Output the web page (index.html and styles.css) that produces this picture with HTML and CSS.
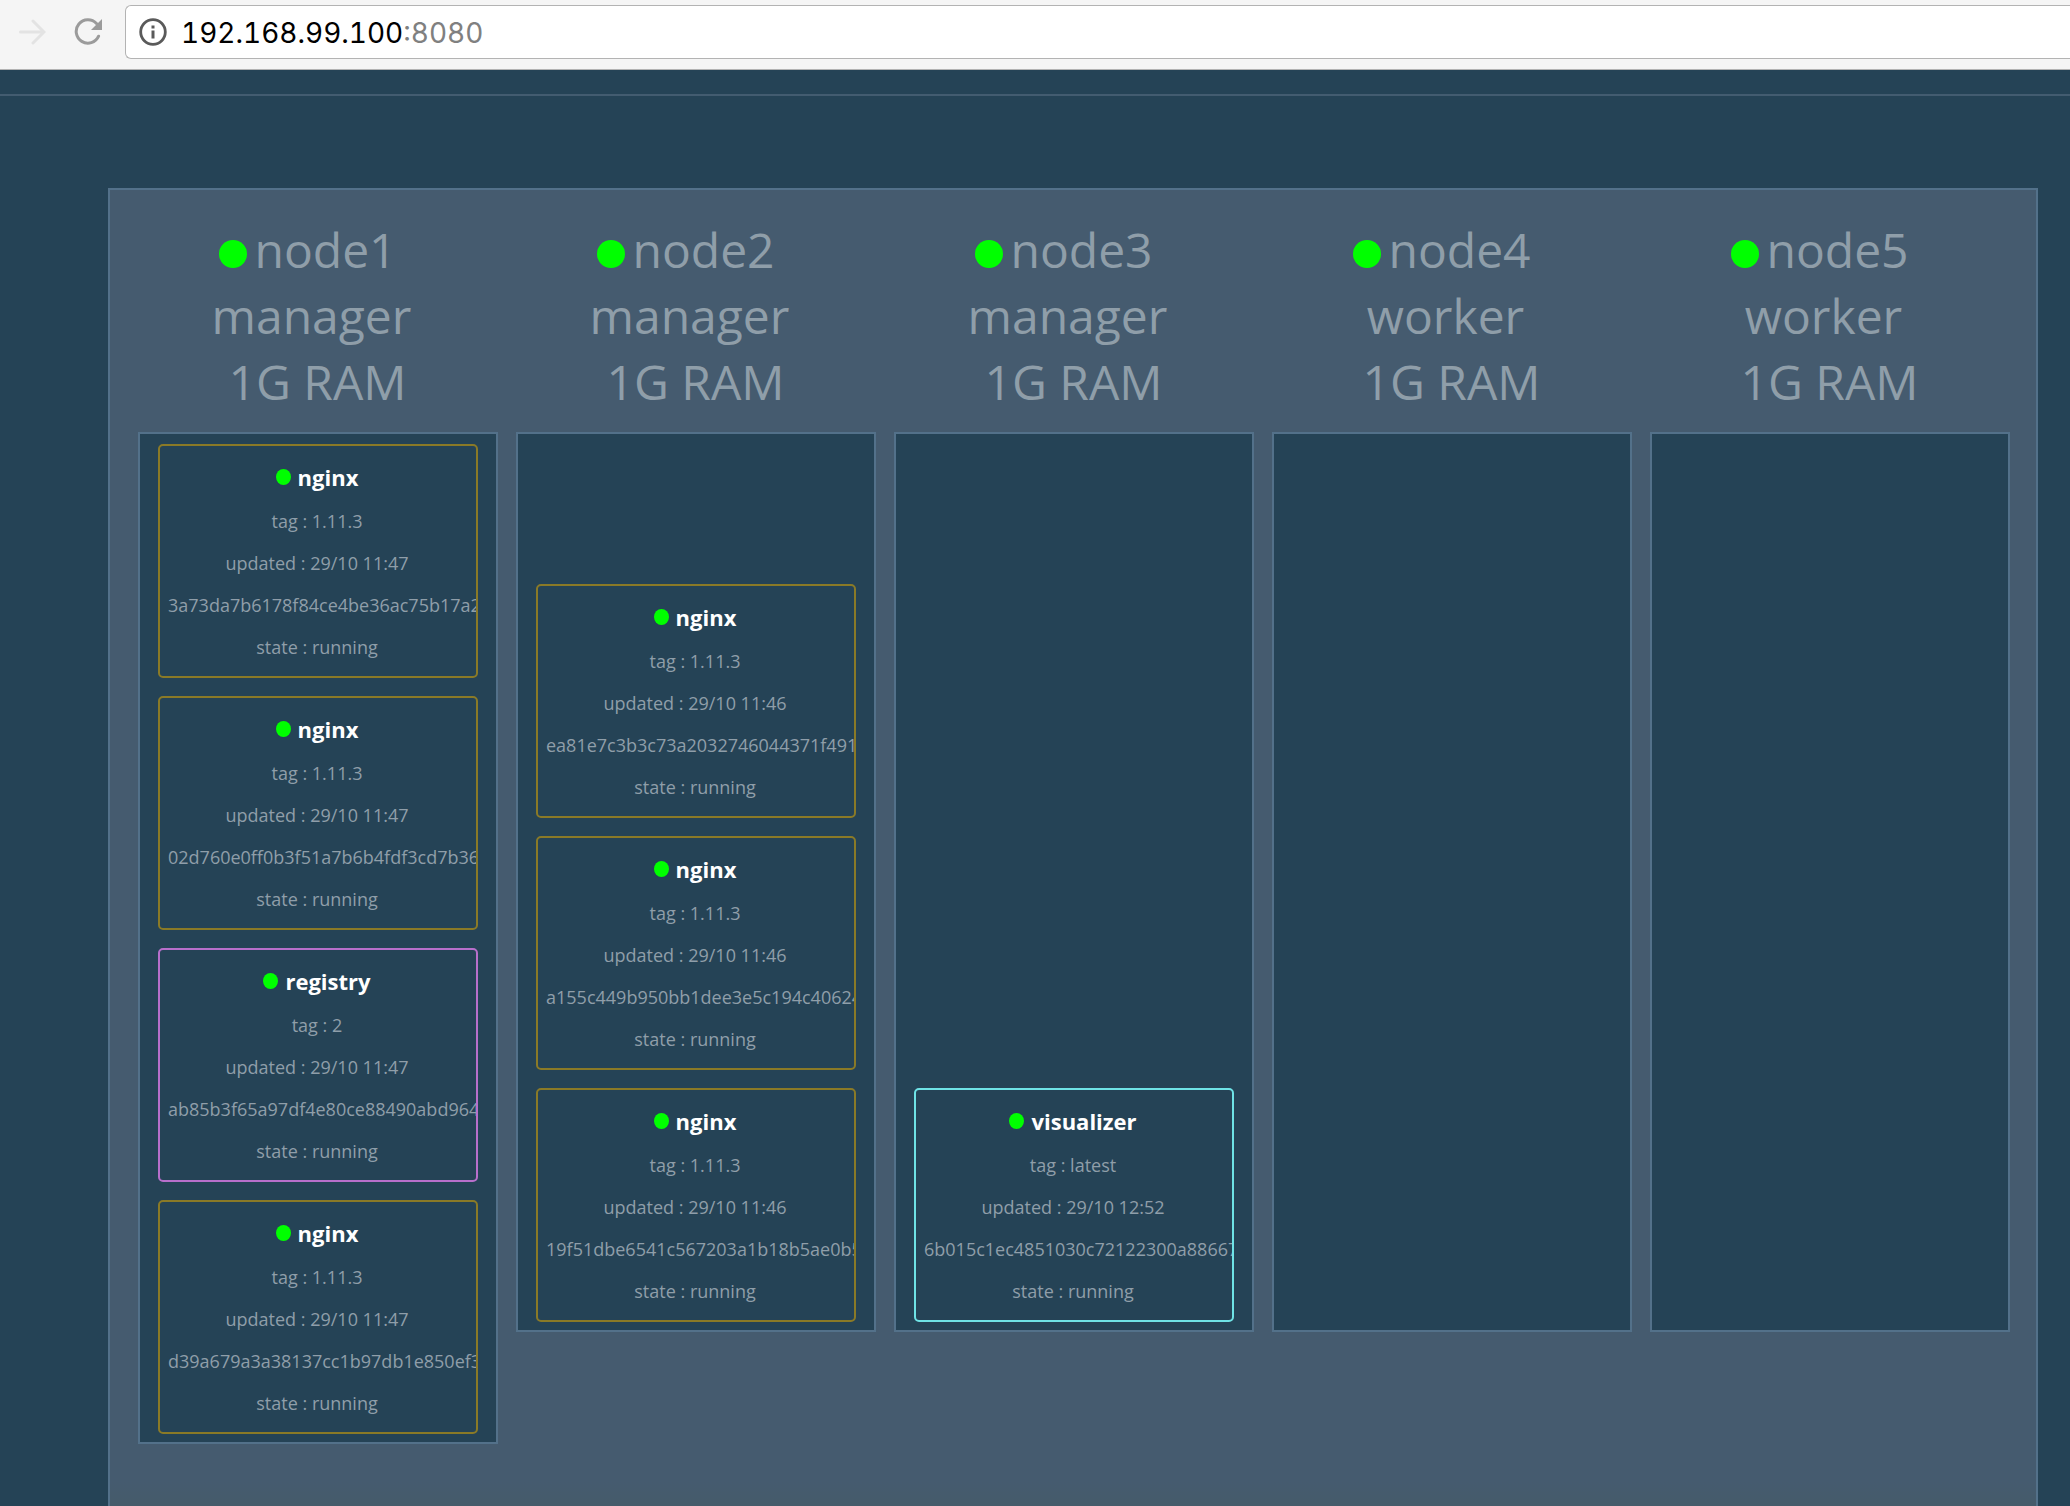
FILE: index.html
```html
<!DOCTYPE html>
<html lang="en">
<head>
<meta charset="utf-8">
<title>Visualizer</title>
<link rel="stylesheet" href="styles.css">
</head>
<body>
<header class="toolbar">
  <button class="tool forward" type="button" aria-label="Forward" disabled>
    <svg width="28" height="28" viewBox="0 0 28 28" fill="none" stroke="#e3e3e3" stroke-width="3" stroke-linecap="round" stroke-linejoin="miter"><path d="M2.500 14H25.500M15 3L26 14L15 25"/></svg>
  </button>
  <button class="tool reload" type="button" aria-label="Reload">
    <svg width="28" height="28" viewBox="0 0 28 28"><path d="M22.500 5.500A11.700 11.700 0 1 0 24.600 18.200" fill="none" stroke="#9b9b9b" stroke-width="3" stroke-linecap="round"/><path d="M28 1V12H17Z" fill="#9b9b9b"/></svg>
  </button>
  <div class="address">
    <svg width="28" height="28" viewBox="0 0 28 28" aria-hidden="true"><circle cx="14" cy="14" r="12.300" fill="none" stroke="#5a5a5a" stroke-width="2.800"/><path d="M12.500 7.500h3v3h-3zM12.500 12.500h3v8h-3z" fill="#5a5a5a"/></svg>
    <a class="url" href="#">192.168.99.100<span class="port">:8080</span></a>
  </div>
</header>
<main class="page">
  <div class="cluster">
    <section class="node">
      <h2 class="node-head"><span class="name"><i class="led"></i>node1</span><span class="role">manager</span><span class="ram">1G RAM</span></h2>
      <div class="tasks">
        <article class="task nginx"><h3><i class="dot"></i>nginx</h3><p>tag : 1.11.3</p><p>updated : 29/10 11:47</p><p class="id">3a73da7b6178f84ce4be36ac75b17a2</p><p>state : running</p></article>
        <article class="task nginx"><h3><i class="dot"></i>nginx</h3><p>tag : 1.11.3</p><p>updated : 29/10 11:47</p><p class="id">02d760e0ff0b3f51a7b6b4fdf3cd7b36</p><p>state : running</p></article>
        <article class="task registry"><h3><i class="dot"></i>registry</h3><p>tag : 2</p><p>updated : 29/10 11:47</p><p class="id">ab85b3f65a97df4e80ce88490abd964</p><p>state : running</p></article>
        <article class="task nginx"><h3><i class="dot"></i>nginx</h3><p>tag : 1.11.3</p><p>updated : 29/10 11:47</p><p class="id">d39a679a3a38137cc1b97db1e850ef3</p><p>state : running</p></article>
      </div>
    </section>
    <section class="node">
      <h2 class="node-head"><span class="name"><i class="led"></i>node2</span><span class="role">manager</span><span class="ram">1G RAM</span></h2>
      <div class="tasks">
        <article class="task nginx"><h3><i class="dot"></i>nginx</h3><p>tag : 1.11.3</p><p>updated : 29/10 11:46</p><p class="id">ea81e7c3b3c73a2032746044371f491</p><p>state : running</p></article>
        <article class="task nginx"><h3><i class="dot"></i>nginx</h3><p>tag : 1.11.3</p><p>updated : 29/10 11:46</p><p class="id">a155c449b950bb1dee3e5c194c40624</p><p>state : running</p></article>
        <article class="task nginx"><h3><i class="dot"></i>nginx</h3><p>tag : 1.11.3</p><p>updated : 29/10 11:46</p><p class="id">19f51dbe6541c567203a1b18b5ae0b5</p><p>state : running</p></article>
      </div>
    </section>
    <section class="node">
      <h2 class="node-head"><span class="name"><i class="led"></i>node3</span><span class="role">manager</span><span class="ram">1G RAM</span></h2>
      <div class="tasks">
        <article class="task visualizer"><h3><i class="dot"></i>visualizer</h3><p>tag : latest</p><p>updated : 29/10 12:52</p><p class="id">6b015c1ec4851030c72122300a88667</p><p>state : running</p></article>
      </div>
    </section>
    <section class="node">
      <h2 class="node-head"><span class="name"><i class="led"></i>node4</span><span class="role">worker</span><span class="ram">1G RAM</span></h2>
      <div class="tasks"></div>
    </section>
    <section class="node">
      <h2 class="node-head"><span class="name"><i class="led"></i>node5</span><span class="role">worker</span><span class="ram">1G RAM</span></h2>
      <div class="tasks"></div>
    </section>
  </div>
</main>
</body>
</html>
```

FILE: styles.css
```css
* { box-sizing: border-box; }
body {
  margin: 0;
  min-height: 100vh;
  display: flex;
  flex-direction: column;
  background: #254356;
  color: #8f9ea9;
  font-family: "Open Sans", sans-serif;
}
h2, h3, p { margin: 0; }

.toolbar {
  display: flex;
  align-items: center;
  height: 70px;
  padding: 0 0 5px 18px;
  background: #f5f5f5;
  border-bottom: 1px solid #b3b3b3;
}
.tool {
  display: flex;
  padding: 0;
  border: 0;
  background: none;
}
.tool svg, .address svg { display: block; flex: none; }
.reload { margin-left: 28px; }
.address {
  flex: 1;
  display: flex;
  align-items: center;
  gap: 14px;
  height: 54px;
  margin-left: 23px;
  padding-left: 13px;
  background: #fff;
  border: 1px solid #b3b3b3;
  border-right: 0;
  border-radius: 6px 0 0 6px;
}
.url {
  padding-top: 2px;
  color: #000;
  font: 28px/36px Inter, sans-serif;
  font-variant-numeric: tabular-nums;
  text-decoration: none;
}
.port { color: #808080; }

.page {
  flex: 1;
  display: flex;
  margin-top: 24px;
  padding: 92px 32px 0 108px;
  border-top: 2px solid #435c70;
}
.cluster {
  flex: 1;
  display: grid;
  grid-template-columns: repeat(5, 1fr);
  align-items: start;
  gap: 18px;
  padding: 27px 26px 60px 28px;
  background: linear-gradient(#455b6f, #455b6a) bottom / 100% 24px no-repeat #455b6f;
  border: 2px solid #53718a;
  border-bottom: 0;
}
.node { min-width: 0; }
.node-head {
  display: flex;
  flex-direction: column;
  margin-bottom: 17px;
  font-size: 48px;
  font-weight: 400;
  line-height: 66px;
  text-align: center;
}
.name {
  display: flex;
  align-items: center;
  justify-content: center;
  gap: 7px;
  padding-right: 20px;
}
.led {
  width: 28px;
  height: 28px;
  margin-top: 8px;
  border-radius: 50%;
  background: #0f0;
}
.role { padding-right: 13px; }
.ram { padding-right: 1px; }
.tasks {
  display: flex;
  flex-direction: column;
  justify-content: flex-end;
  gap: 18px;
  min-height: 900px;
  padding: 10px 18px 8px;
  background: #254356;
  border: 2px solid #53718a;
}
.task {
  height: 234px;
  padding: 10px 8px;
  border: 2px solid;
  border-radius: 5px;
  overflow: hidden;
  font-size: 18px;
  line-height: 42px;
  text-align: center;
  white-space: nowrap;
}
.task.nginx { border-color: #8a7a27; }
.task.registry { border-color: #b86fcb; }
.task.visualizer { border-color: #6fe3e6; }
.task h3 {
  display: flex;
  align-items: center;
  justify-content: center;
  gap: 7px;
  margin-bottom: 2px;
  padding-right: 2px;
  color: #fff;
  font-size: 22px;
  font-weight: 700;
  line-height: 40px;
}
.task p {
  padding-right: 2px;
  color: #8f9ea9;
}
.task .id { padding-right: 0; }
.task h3 + p { padding-top: 0; }
.task h3 { height: 42px; }
.dot {
  width: 15px;
  height: 16px;
  border-radius: 50%;
  background: #0f0;
}
```
